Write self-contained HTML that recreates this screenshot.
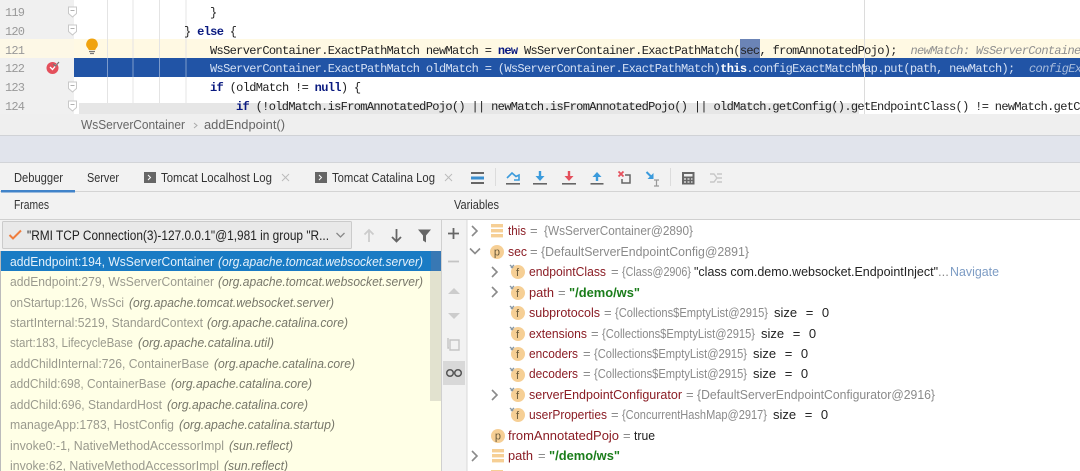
<!DOCTYPE html>
<html><head><meta charset="utf-8"><style>
html,body{margin:0;padding:0;background:#fff;width:1080px;height:471px;overflow:hidden}
svg{display:block;filter:blur(.3px)}
.m{font-family:"Liberation Mono",monospace;font-size:12px;letter-spacing:-.66px;fill:#222;white-space:pre}
.n{font-family:"Liberation Mono",monospace;font-size:12px;letter-spacing:-.8px;fill:#999}
.k{font-weight:bold;fill:#0a1a80}
.s{font-family:"Liberation Sans",sans-serif;font-size:13px;fill:#444;white-space:pre}
.i{font-style:italic}
.f{fill:#9a9a8e}
.v{fill:#8a1c24}.g{fill:#8a8a8a}.q{fill:#1a7d1a;font-weight:bold}.d{fill:#222}
.z{fill:#222;word-spacing:5px}
.ic{fill:none;stroke-width:1.6}
</style></head><body>
<svg width="1080" height="471" viewBox="0 0 1080 471" xmlns="http://www.w3.org/2000/svg">
<defs>
<g id="fi"><circle cx="0" cy="0" r="7" fill="#f6cf95"/><text x="-2" y="4" font-family="Liberation Sans,sans-serif" font-size="11" fill="#6a5a3a">f</text><path d="M-8-7l3 3M-7-4l3-3" stroke="#8a98a4" stroke-width="1.4" fill="none"/></g>
<g id="pi"><circle cx="0" cy="0" r="7" fill="#f6cf95"/><text x="-3.2" y="3.5" font-family="Liberation Sans,sans-serif" font-size="11" fill="#6a5a3a">p</text></g>
<path id="cr" d="M-2-5l5 5-5 5" fill="none" stroke="#8a8a8a" stroke-width="1.6"/>
<path id="cd" d="M-5-2.5l5 5 5-5" fill="none" stroke="#8a8a8a" stroke-width="1.6"/>
<g id="li"><rect x="-6" y="-7" width="12" height="3.4" fill="#f6cf95"/><rect x="-6" y="-2" width="12" height="3.4" fill="#f6cf95"/><rect x="-6" y="3" width="12" height="3.4" fill="#f6cf95"/></g>
<g id="fold"><path d="M-4-5h8v6.500l-4 3.500-4-3.500z" fill="#fff" stroke="#c8c8c8"/><path d="M-2-1.500h4" stroke="#b0b0b0"/></g>
<clipPath id="ed"><rect x="74" y="0" width="1006" height="114"/></clipPath>
</defs>
<rect width="1080" height="471" fill="#fff"/>
<!-- editor -->
<rect x="0" y="0" width="74" height="114" fill="#f0f0f0"/>
<rect x="0" y="39" width="1080" height="19" fill="#fff9e3"/>
<rect x="0" y="39" width="74" height="19" fill="#fdf8e6"/>
<rect x="74" y="58" width="1006" height="19" fill="#2154a6"/>
<g stroke="#e4e4e4"><path d="M107.5 0V103M133 0V103M159.500 0V103M186 0V103"/></g>
<g stroke="#7d9bcb"><path d="M107.500 58V77M133 58V77M159.500 58V77M186 58V77"/></g>
<rect x="79" y="103" width="780" height="11" fill="#e6e6e6"/>
<path d="M864.500 0V114" stroke="#dcdcdc"/>
<rect x="740" y="39" width="20" height="19" fill="#6b84b6"/>
<text class="n" x="5" y="16">119</text><text class="n" x="5" y="35">120</text><text class="n" x="5" y="54">121</text><text class="n" x="5" y="72">122</text><text class="n" x="5" y="91">123</text><text class="n" x="5" y="110">124</text>
<use href="#fold" x="72.500" y="12"/><use href="#fold" x="72.500" y="30"/><use href="#fold" x="72.500" y="87"/><use href="#fold" x="72.500" y="106"/>
<!-- bulb -->
<path d="M92 38.500a5.800 5.800 0 0 1 4 10l-.8 1.500h-6.400l-.8-1.500A5.800 5.800 0 0 1 92 38.500z" fill="#f0a30f"/><path d="M89 51.500h6M90 53.500h4" stroke="#777" stroke-width="1.200"/>
<!-- breakpoint -->
<circle cx="52.500" cy="68" r="6" fill="#e4505c"/><path d="M50 67l2.500 2.500 5-6" fill="none" stroke="#fff" stroke-width="1.300"/><path d="M53 64l2.500 2 3.500-4" fill="none" stroke="#777" stroke-width="1.200"/>
<g clip-path="url(#ed)">
<text class="m" x="210" y="16">}</text>
<text class="m" x="184" y="35">} <tspan class="k">else</tspan> {</text>
<text class="m" x="210" y="54">WsServerContainer.ExactPathMatch newMatch = <tspan class="k">new</tspan> WsServerContainer.ExactPathMatch(sec, fromAnnotatedPojo);</text>
<text class="m i" x="910.500" y="54" style="fill:#8f8f8f;font-style:italic">newMatch: WsServerContainer</text>
<text class="m" x="210" y="72" style="fill:#d4e0f4">WsServerContainer.ExactPathMatch oldMatch = (WsServerContainer.ExactPathMatch)<tspan font-weight="bold" fill="#fff">this</tspan>.configExactMatchMap.put(path, newMatch);</text>
<text class="m" x="1029" y="72" style="fill:#a8bcdc;font-style:italic">configExactMatchMap</text>
<text class="m" x="210" y="91"><tspan class="k">if</tspan> (oldMatch != <tspan class="k">null</tspan>) {</text>
<text class="m" x="236" y="110"><tspan class="k">if</tspan> (!oldMatch.isFromAnnotatedPojo() || newMatch.isFromAnnotatedPojo() || oldMatch.getConfig().getEndpointClass() != newMatch.getConfig()</text>
</g>
<!-- breadcrumb -->
<rect x="0" y="114" width="1080" height="21" fill="#efefef"/>
<text class="s" x="81" y="129" textLength="104" lengthAdjust="spacingAndGlyphs" style="fill:#666">WsServerContainer</text>
<path d="M194 123l3 2.500-3 2.500" fill="none" stroke="#aaa"/>
<text class="s" x="204" y="129" textLength="81" lengthAdjust="spacingAndGlyphs" style="fill:#666">addEndpoint()</text>
<!-- band -->
<rect x="0" y="135" width="1080" height="28" fill="#e1e4ec"/>
<rect x="0" y="135" width="1080" height="1" fill="#d0d2d6"/>
<rect x="0" y="162" width="1080" height="1" fill="#d2d4d8"/>
<!-- tabs -->
<rect x="0" y="163" width="1080" height="56" fill="#f2f2f2"/>
<rect x="0" y="191" width="1080" height="1" fill="#d4d4d4"/>
<rect x="1" y="190" width="74" height="2.500" fill="#4083c9"/>
<rect x="0" y="219" width="1080" height="1" fill="#d0d0d0"/>
<text class="s" x="14" y="182" textLength="49" lengthAdjust="spacingAndGlyphs" style="fill:#333">Debugger</text>
<text class="s" x="87" y="182" textLength="32" lengthAdjust="spacingAndGlyphs" style="fill:#333">Server</text>
<rect x="144" y="172" width="12" height="11" fill="#666"/><path d="M148 175l2.500 2.500-2.500 2.500" fill="none" stroke="#fff"/>
<text class="s" x="161" y="182" textLength="111" lengthAdjust="spacingAndGlyphs" style="fill:#333">Tomcat Localhost Log</text>
<path d="M282 174l7 7M289 174l-7 7" stroke="#bbb"/>
<rect x="315" y="172" width="12" height="11" fill="#666"/><path d="M319 175l2.500 2.500-2.500 2.500" fill="none" stroke="#fff"/>
<text class="s" x="332" y="182" textLength="103" lengthAdjust="spacingAndGlyphs" style="fill:#333">Tomcat Catalina Log</text>
<path d="M445 174l7 7M452 174l-7 7" stroke="#bbb"/>
<!-- toolbar -->
<rect x="471" y="172" width="13" height="2" fill="#666"/><rect x="471" y="176.500" width="13" height="3" fill="#3b8fd0"/><rect x="471" y="182" width="13" height="2" fill="#666"/>
<path d="M495.500 168V186M670.500 168V186" stroke="#dcdcdc"/>
<path d="M507 178l5-5 4 3.500 3-1.500v5h-5" class="ic" stroke="#3b9bdc"/><rect x="506" y="183" width="14" height="1.600" fill="#666"/>
<path d="M540 171v8" stroke="#3b9bdc" stroke-width="2.400"/><path d="M535.500 176h9l-4.500 5z" fill="#3b9bdc"/><rect x="533" y="183" width="14" height="1.600" fill="#666"/>
<path d="M569 171v8" stroke="#e4505c" stroke-width="2.400"/><path d="M564.500 176h9l-4.500 5z" fill="#e4505c"/><rect x="562" y="183" width="14" height="1.600" fill="#666"/>
<path d="M597 181v-7" stroke="#3b9bdc" stroke-width="2.400"/><path d="M592.500 177h9l-4.500-5z" fill="#3b9bdc"/><rect x="590.500" y="183" width="13" height="1.600" fill="#666"/>
<path d="M618.500 171.500l5 5M623.500 171.500l-5 5" stroke="#e4505c" stroke-width="1.800"/><path d="M625 175h5v8h-8v-4" fill="none" stroke="#666" stroke-width="1.500"/>
<path d="M646.500 172l6 6" stroke="#3b9bdc" stroke-width="2"/><path d="M653.500 173v6h-6z" fill="#3b9bdc"/><path d="M654 180h5M656.500 180v6M654 186h5" stroke="#999" stroke-width="1.200"/>
<rect x="682" y="172" width="12.500" height="12.500" fill="#666"/><rect x="684" y="174" width="8.500" height="2.500" fill="#eee"/><path d="M684 179h2M687.500 179h2M691 179h1.500M684 182h2M687.500 182h2M691 182h1.500" stroke="#eee" stroke-width="1.200"/>
<path d="M710 174h4l3 4h5M710 182h4l3-4M717 174h5M717 182h5" fill="none" stroke="#c8c8c8" stroke-width="1.400"/>
<!-- frames header -->
<text class="s" x="14" y="209" textLength="35" lengthAdjust="spacingAndGlyphs" style="fill:#333">Frames</text>
<text class="s" x="454" y="209" textLength="45" lengthAdjust="spacingAndGlyphs" style="fill:#333">Variables</text>
<!-- frames panel -->
<rect x="0" y="220" width="441" height="31" fill="#f2f2f2"/>
<rect x="2.500" y="221.500" width="349" height="27" rx="1" fill="#e9e9e9" stroke="#cbcbcb"/>
<path d="M9.500 235l3.500 3.500 8-8" fill="none" stroke="#ef7e3e" stroke-width="2"/>
<text class="s" x="27" y="240" textLength="302" lengthAdjust="spacingAndGlyphs" style="fill:#222;font-size:13.5px">"RMI TCP Connection(3)-127.0.0.1"@1,981 in group "R...</text>
<path d="M336.500 233l4 4 4-4" fill="none" stroke="#888" stroke-width="1.300"/>
<path d="M369 242v-12M364.500 234.500l4.500-4.500 4.500 4.500" fill="none" stroke="#ccc" stroke-width="1.800"/>
<path d="M396.500 229v12M392 237l4.500 4.500 4.500-4.500" fill="none" stroke="#666" stroke-width="1.800"/>
<path d="M418 229.500h13l-5 6v7l-3-2v-5z" fill="#666"/>
<rect x="0" y="251" width="441" height="220" fill="#ffffe6"/>
<rect x="0" y="251" width="1" height="220" fill="#bbb"/>
<rect x="430" y="271" width="11" height="130" fill="#e2e2cf"/>
<rect x="1" y="251" width="430" height="20" fill="#1a7bc4"/>
<rect x="431" y="251" width="10" height="20" fill="#3878b4"/>
<text class="s" x="10" y="266" textLength="204" lengthAdjust="spacingAndGlyphs" style="fill:#e6f2fb">addEndpoint:194, WsServerContainer</text>
<text class="s i" x="218" y="266" textLength="205" lengthAdjust="spacingAndGlyphs" style="fill:#e6f2fb;font-style:italic">(org.apache.tomcat.websocket.server)</text>
<g>
<text class="s f" x="10" y="286" textLength="204" lengthAdjust="spacingAndGlyphs">addEndpoint:279, WsServerContainer</text><text class="s i" x="218" y="286" textLength="205" lengthAdjust="spacingAndGlyphs" style="fill:#77776a">(org.apache.tomcat.websocket.server)</text>
<text class="s f" x="10" y="307" textLength="114" lengthAdjust="spacingAndGlyphs">onStartup:126, WsSci</text><text class="s i" x="129" y="307" textLength="205" lengthAdjust="spacingAndGlyphs" style="fill:#77776a">(org.apache.tomcat.websocket.server)</text>
<text class="s f" x="10" y="327" textLength="193" lengthAdjust="spacingAndGlyphs">startInternal:5219, StandardContext</text><text class="s i" x="207" y="327" textLength="141" lengthAdjust="spacingAndGlyphs" style="fill:#77776a">(org.apache.catalina.core)</text>
<text class="s f" x="10" y="347" textLength="123" lengthAdjust="spacingAndGlyphs">start:183, LifecycleBase</text><text class="s i" x="138" y="347" textLength="136" lengthAdjust="spacingAndGlyphs" style="fill:#77776a">(org.apache.catalina.util)</text>
<text class="s f" x="10" y="368" textLength="199" lengthAdjust="spacingAndGlyphs">addChildInternal:726, ContainerBase</text><text class="s i" x="214" y="368" textLength="141" lengthAdjust="spacingAndGlyphs" style="fill:#77776a">(org.apache.catalina.core)</text>
<text class="s f" x="10" y="388" textLength="156" lengthAdjust="spacingAndGlyphs">addChild:698, ContainerBase</text><text class="s i" x="171" y="388" textLength="141" lengthAdjust="spacingAndGlyphs" style="fill:#77776a">(org.apache.catalina.core)</text>
<text class="s f" x="10" y="409" textLength="152" lengthAdjust="spacingAndGlyphs">addChild:696, StandardHost</text><text class="s i" x="167" y="409" textLength="141" lengthAdjust="spacingAndGlyphs" style="fill:#77776a">(org.apache.catalina.core)</text>
<text class="s f" x="10" y="429" textLength="164" lengthAdjust="spacingAndGlyphs">manageApp:1783, HostConfig</text><text class="s i" x="179" y="429" textLength="156" lengthAdjust="spacingAndGlyphs" style="fill:#77776a">(org.apache.catalina.startup)</text>
<text class="s f" x="10" y="450" textLength="214" lengthAdjust="spacingAndGlyphs">invoke0:-1, NativeMethodAccessorImpl</text><text class="s i" x="229" y="450" textLength="64" lengthAdjust="spacingAndGlyphs" style="fill:#77776a">(sun.reflect)</text>
<text class="s f" x="10" y="470" textLength="209" lengthAdjust="spacingAndGlyphs">invoke:62, NativeMethodAccessorImpl</text><text class="s i" x="224" y="470" textLength="64" lengthAdjust="spacingAndGlyphs" style="fill:#77776a">(sun.reflect)</text>
</g>
<!-- vars toolbar -->
<rect x="441" y="220" width="26" height="251" fill="#f2f2f2"/>
<rect x="441" y="220" width="1" height="251" fill="#d0d0d0"/>
<rect x="466.500" y="220" width="1" height="251" fill="#d8d8d8"/>
<path d="M448 233.500h11M453.500 228v11" stroke="#666" stroke-width="1.800"/>
<path d="M448 261.500h11" stroke="#c4c4c4" stroke-width="1.800"/>
<path d="M448 294h12l-6-6z" fill="#ccc"/><path d="M448 313h12l-6 6z" fill="#ccc"/>
<path d="M448 338v10h1M450 340h9v10h-9z" fill="none" stroke="#c4c4c4" stroke-width="1.400"/>
<rect x="443" y="361" width="22" height="24" fill="#d8d8d8"/>
<circle cx="450" cy="373" r="3.300" fill="none" stroke="#555" stroke-width="1.500"/><circle cx="458" cy="373" r="3.300" fill="none" stroke="#555" stroke-width="1.500"/>
<!-- vars -->
<use href="#cr" x="474" y="231"/><use href="#li" x="497" y="231"/>
<text class="s v" x="508" y="235" textLength="18" lengthAdjust="spacingAndGlyphs">this</text><text class="s g" x="530" y="235">=</text>
<text class="s g" x="544" y="235" textLength="149" lengthAdjust="spacingAndGlyphs">{WsServerContainer@2890}</text>
<use href="#cd" x="475" y="251"/><use href="#pi" x="497" y="252"/>
<text class="s v" x="508" y="256" textLength="19" lengthAdjust="spacingAndGlyphs">sec</text><text class="s g" x="530" y="256">=</text>
<text class="s g" x="541" y="256" textLength="208" lengthAdjust="spacingAndGlyphs">{DefaultServerEndpointConfig@2891}</text>

<use href="#cr" x="494" y="272"/><use href="#fi" x="518" y="272"/>
<text class="s v" x="529" y="276" textLength="77" lengthAdjust="spacingAndGlyphs">endpointClass</text><text class="s g" x="611" y="276">=</text>
<text class="s g" x="622" y="276" textLength="69" lengthAdjust="spacingAndGlyphs">{Class@2906}</text>
<text class="s d" x="694" y="276" textLength="244" lengthAdjust="spacingAndGlyphs">"class com.demo.websocket.EndpointInject"</text><text class="s g" x="938" y="276">...</text>
<text class="s" x="950" y="276" textLength="49" lengthAdjust="spacingAndGlyphs" style="fill:#7d9cc4">Navigate</text>

<use href="#cr" x="494" y="292"/><use href="#fi" x="518" y="293"/>
<text class="s v" x="529" y="297" textLength="25" lengthAdjust="spacingAndGlyphs">path</text><text class="s g" x="558" y="297">=</text>
<text class="s q" x="569" y="297" textLength="71" lengthAdjust="spacingAndGlyphs">"/demo/ws"</text>

<use href="#fi" x="518" y="313"/>
<text class="s v" x="529" y="317" textLength="71" lengthAdjust="spacingAndGlyphs">subprotocols</text><text class="s g" x="604" y="317">=</text>
<text class="s g" x="615" y="317" textLength="153" lengthAdjust="spacingAndGlyphs">{Collections$EmptyList@2915}</text><text class="s z" x="774" y="317">size = 0</text>

<use href="#fi" x="518" y="334"/>
<text class="s v" x="529" y="338" textLength="58" lengthAdjust="spacingAndGlyphs">extensions</text><text class="s g" x="591" y="338">=</text>
<text class="s g" x="602" y="338" textLength="153" lengthAdjust="spacingAndGlyphs">{Collections$EmptyList@2915}</text><text class="s z" x="761" y="338">size = 0</text>

<use href="#fi" x="518" y="354"/>
<text class="s v" x="529" y="358" textLength="49" lengthAdjust="spacingAndGlyphs">encoders</text><text class="s g" x="583" y="358">=</text>
<text class="s g" x="594" y="358" textLength="153" lengthAdjust="spacingAndGlyphs">{Collections$EmptyList@2915}</text><text class="s z" x="753" y="358">size = 0</text>

<use href="#fi" x="518" y="375"/>
<text class="s v" x="529" y="378" textLength="49" lengthAdjust="spacingAndGlyphs">decoders</text><text class="s g" x="583" y="378">=</text>
<text class="s g" x="594" y="378" textLength="153" lengthAdjust="spacingAndGlyphs">{Collections$EmptyList@2915}</text><text class="s z" x="753" y="378">size = 0</text>

<use href="#cr" x="494" y="395"/><use href="#fi" x="518" y="395"/>
<text class="s v" x="529" y="399" textLength="153" lengthAdjust="spacingAndGlyphs">serverEndpointConfigurator</text><text class="s g" x="686" y="399">=</text>
<text class="s g" x="697" y="399" textLength="238" lengthAdjust="spacingAndGlyphs">{DefaultServerEndpointConfigurator@2916}</text>

<use href="#fi" x="518" y="415"/>
<text class="s v" x="529" y="419" textLength="78" lengthAdjust="spacingAndGlyphs">userProperties</text><text class="s g" x="611" y="419">=</text>
<text class="s g" x="622" y="419" textLength="145" lengthAdjust="spacingAndGlyphs">{ConcurrentHashMap@2917}</text><text class="s z" x="773" y="419">size = 0</text>

<use href="#pi" x="498" y="436"/>
<text class="s v" x="508" y="440" textLength="111" lengthAdjust="spacingAndGlyphs">fromAnnotatedPojo</text><text class="s g" x="623" y="440">=</text>
<text class="s d" x="634" y="440" textLength="21" lengthAdjust="spacingAndGlyphs">true</text>

<use href="#cr" x="474" y="456"/><use href="#li" x="498" y="456"/>
<text class="s v" x="508" y="460" textLength="25" lengthAdjust="spacingAndGlyphs">path</text><text class="s g" x="538" y="460">=</text>
<text class="s q" x="549" y="460" textLength="71" lengthAdjust="spacingAndGlyphs">"/demo/ws"</text>
<rect x="491" y="470" width="12" height="1" fill="#f6cf95"/>
</svg>
</body></html>
